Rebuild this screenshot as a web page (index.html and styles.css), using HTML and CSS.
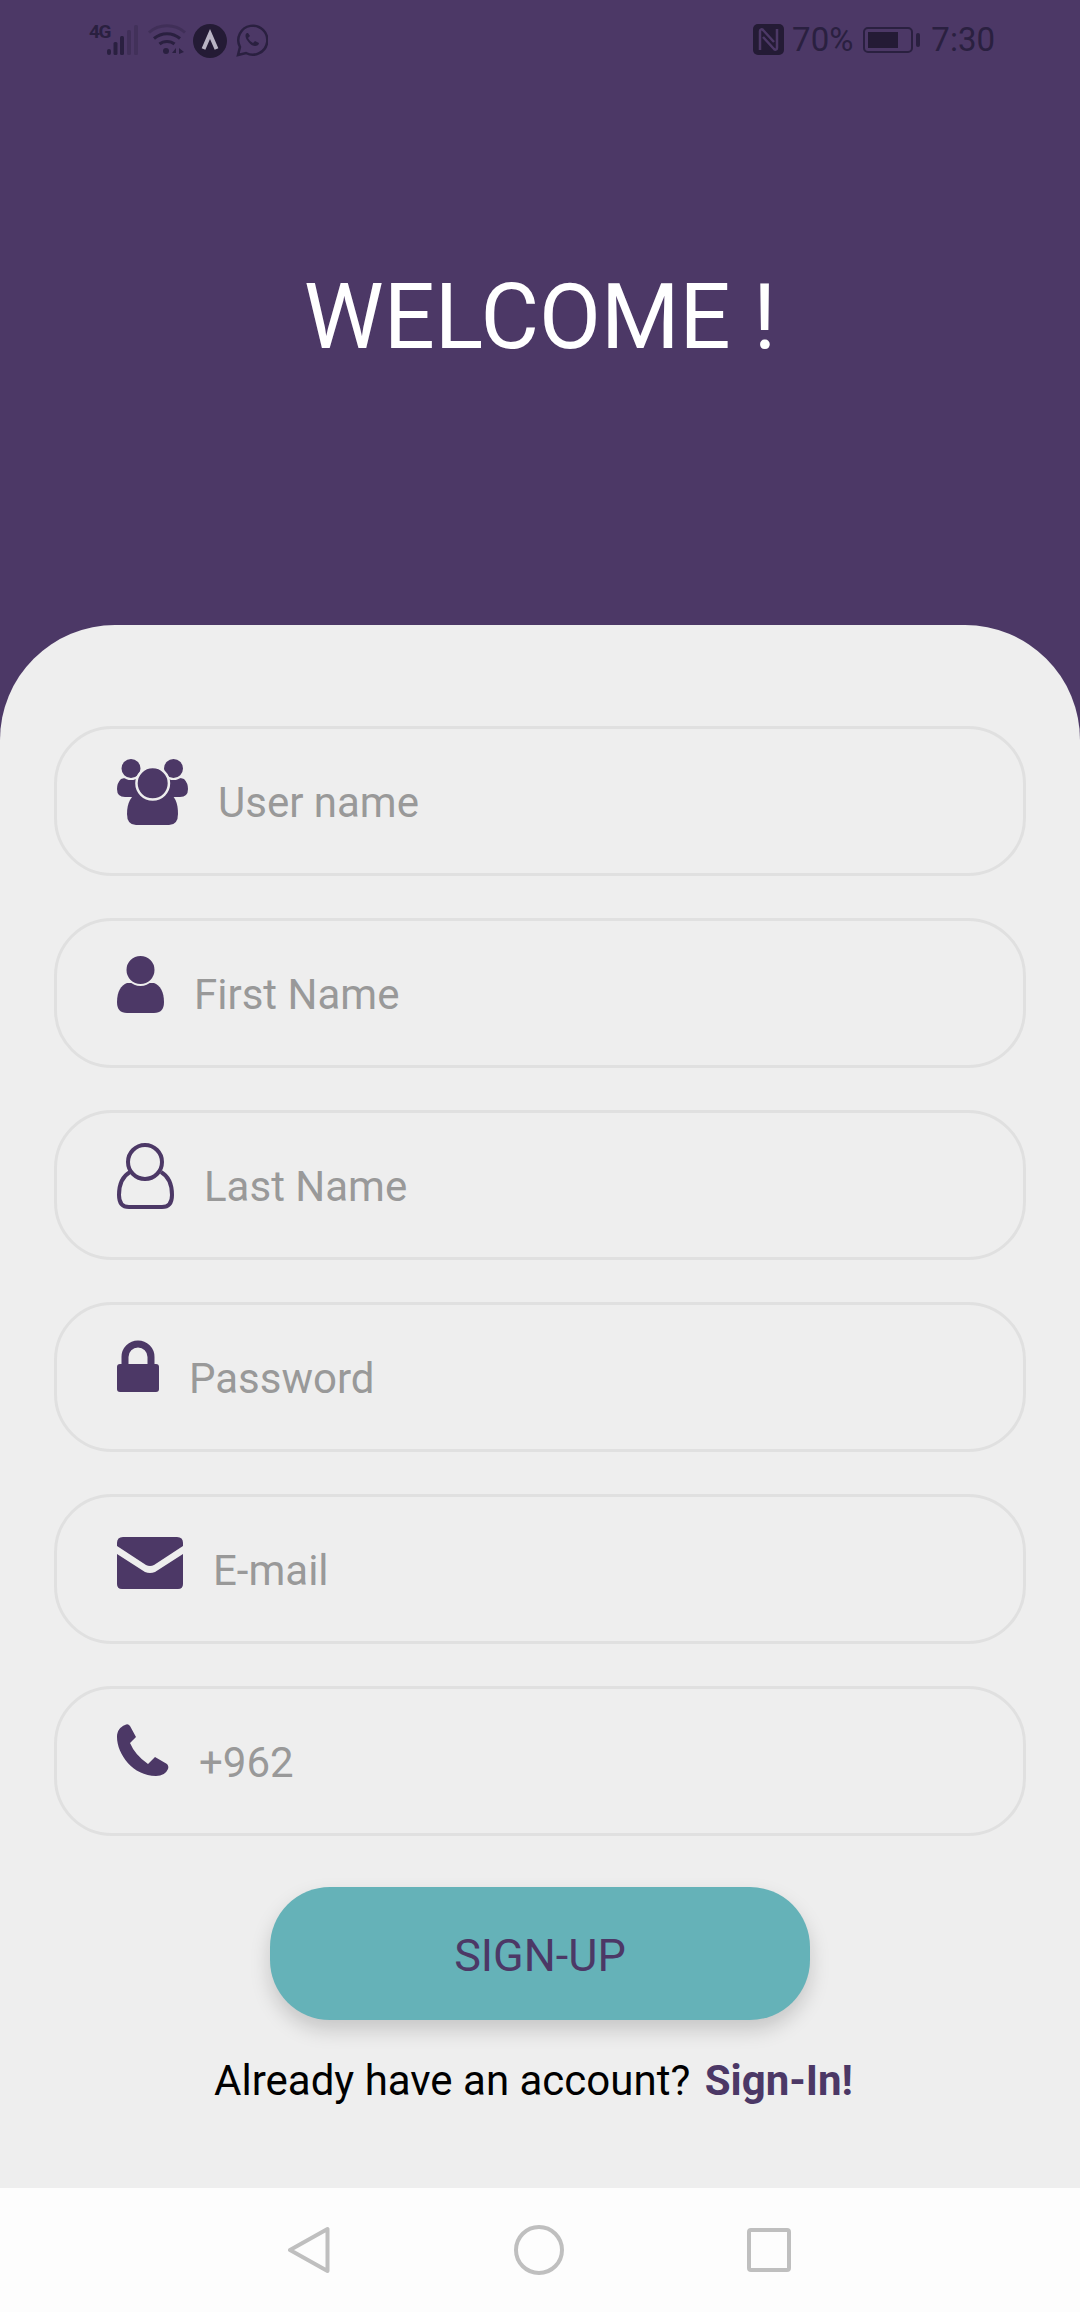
FILE: index.html
```html
<!DOCTYPE html>
<html lang="en">
<head>
    <meta charset="UTF-8">
    <title>Sign up</title>
    <link rel="stylesheet" href="styles.css">
</head>
<body>
    <div id="page">
        <div id="top">
            <div id="status">
                <div class="status-left">
                    <span class="net">4G</span>
                    <svg class="ic-signal" width="32" height="32" viewBox="0 0 32 32">
                        <rect x="0" y="25" width="4" height="6" rx="2" fill="#2a2040"/>
                        <rect x="6.500" y="18" width="4" height="13" rx="1.500" fill="#2a2040"/>
                        <rect x="13" y="12" width="4" height="19" rx="1.500" fill="#2a2040"/>
                        <rect x="20" y="6" width="4" height="25" rx="1.500" fill="#2a2040" opacity=".35"/>
                        <rect x="27" y="1" width="4" height="30" rx="1.500" fill="#2a2040" opacity=".3"/>
                    </svg>
                    <svg class="ic-wifi" width="38" height="32" viewBox="0 0 38 32">
                        <path d="M1 8.500C11-.5 27-.5 37 8.500" fill="none" stroke="#2a2040" stroke-width="3" opacity=".35"/>
                        <path d="M6 14.500C13.500 8 24.500 8 32 14.500" fill="none" stroke="#2a2040" stroke-width="3"/>
                        <path d="M11.500 20C15.500 16.500 22.500 16.500 26.500 20" fill="none" stroke="#2a2040" stroke-width="3"/>
                        <circle cx="18" cy="27" r="3" fill="#2a2040"/>
                        <path d="M24 29l4-5v5zM31 24l5 4-5 2z" fill="#2a2040"/>
                    </svg>
                    <svg class="ic-anchor" width="34" height="34" viewBox="0 0 34 34">
                        <circle cx="17" cy="17" r="17" fill="#241b35"/>
                        <path d="M10.500 25L17 10L23.500 25" fill="none" stroke="#b9b4c4" stroke-width="4"/>
                    </svg>
                    <svg class="ic-whats" width="32" height="33" viewBox="0 0 32 33">
                        <path d="M2 31l2-8A14.500 14.500 0 1 1 10 29z" fill="none" stroke="#2a2040" stroke-width="2.500"/>
                        <path d="M11 9c-2 1-2 4 0 7 2 3 5 6 8 6 2 0 4-1 4-3l-4-2-2 2c-2-1-4-3-5-5l2-2-2-3z" fill="#2a2040"/>
                    </svg>
                </div>
                <div class="status-right">
                    <svg class="ic-nfc" width="31" height="31" viewBox="0 0 31 31">
                        <rect width="31" height="31" rx="5" fill="#241b35"/>
                        <path d="M7 26V7c0-2 2-2 3-1l11 12M24 5v19c0 2-2 2-3 1L10 13" fill="none" stroke="#4c3866" stroke-width="2.500"/>
                    </svg>
                    <span class="pct">70%</span>
                    <div class="battery"><div class="battery-fill"></div></div>
                    <div class="battery-tip"></div>
                    <span class="clock">7:30</span>
                </div>
            </div>
            <h1 class="title">WELCOME !</h1>
        </div>

        <div id="card">
            <div class="field">
                <svg class="icon ic-users" width="71" height="66" viewBox="0 0 71 66">
                    <path d="M4 20q5-2 12 0h6v18H8q-8 0-8-8 0-6 4-10zM67 20q-5-2-12 0h-6v18h14q8 0 8-8 0-6-4-10z" fill="#4c3866"/>
                    <circle cx="14" cy="9.500" r="10.500" fill="#4c3866" stroke="#eee" stroke-width="2"/>
                    <circle cx="56.500" cy="9.500" r="10.500" fill="#4c3866" stroke="#eee" stroke-width="2"/>
                    <path d="M10 55c0-11 4-19 12-22h28c8 3 11 11 11 22q0 11-9 11H19q-9 0-9-11z" fill="#4c3866"/>
                    <circle cx="35.700" cy="24.300" r="16.250" fill="#4c3866" stroke="#eee" stroke-width="2.500"/>
                </svg>
                <span class="hint">User name</span>
            </div>
            <div class="field">
                <svg class="icon ic-person" width="47" height="58" viewBox="0 0 47 58">
                    <path d="M10 27C4 29 0 36 0 46q0 11 10 11h27q10 0 10-11c0-10-4-17-10-19z" fill="#4c3866"/>
                    <circle cx="23.500" cy="14" r="15" fill="#4c3866" stroke="#eee" stroke-width="2"/>
                </svg>
                <span class="hint">First Name</span>
            </div>
            <div class="field">
                <svg class="icon ic-outline" width="57" height="66" viewBox="0 0 57 66">
                    <path d="M13 29C6 33 2 41 2 52q0 12 10 12h33q10 0 10-12c0-11-4-19-11-23" fill="none" stroke="#4c3866" stroke-width="4"/>
                    <circle cx="28" cy="19" r="17" fill="none" stroke="#4c3866" stroke-width="4"/>
                </svg>
                <span class="hint">Last Name</span>
            </div>
            <div class="field">
                <svg class="icon ic-lock" width="42" height="52" viewBox="0 0 42 52">
                    <path d="M8 26V17a13 13 0 0 1 26 0v9" fill="none" stroke="#4c3866" stroke-width="7"/>
                    <rect y="24" width="42" height="28" rx="3" fill="#4c3866"/>
                </svg>
                <span class="hint">Password</span>
            </div>
            <div class="field">
                <svg class="icon ic-mail" width="66" height="52" viewBox="0 0 66 52">
                    <path d="M0 6q0-6 6-6h54q6 0 6 6v3L37 28q-4 2-8 0L0 9z" fill="#4c3866"/>
                    <path d="M0 17l28 18q5 2 10 0L66 17v30q0 5-5 5H5q-5 0-5-5z" fill="#4c3866"/>
                </svg>
                <span class="hint">E-mail</span>
            </div>
            <div class="field">
                <svg class="icon ic-phone" width="52" height="52" viewBox="0 0 52 52">
                    <path d="M8 1q3-2 5 1l6 11-6 6q5 12 18 21l7-7 12 7q2 2 1 5-3 7-12 7C16 52 0 30 0 13 0 7 3 3 8 1z" fill="#4c3866"/>
                </svg>
                <span class="hint">+962</span>
            </div>

            <div class="btn">SIGN-UP</div>
            <p class="signin">Already have an account? <a class="signin-link">Sign-In!</a></p>
        </div>

        <div id="nav">
            <svg class="nav-back" width="43" height="48" viewBox="0 0 43 48">
                <path d="M39.500 3v42L2 24z" fill="none" stroke="#bfbfbf" stroke-width="4" stroke-linejoin="round"/>
            </svg>
            <svg width="50" height="50" viewBox="0 0 50 50">
                <circle cx="25" cy="25" r="23" fill="none" stroke="#bfbfbf" stroke-width="4"/>
            </svg>
            <svg width="44" height="44" viewBox="0 0 44 44">
                <rect x="2" y="2" width="40" height="40" rx="2" fill="none" stroke="#bfbfbf" stroke-width="4"/>
            </svg>
        </div>
    </div>
</body>
</html>
```

FILE: styles.css
```css
*{
    margin: 0;
    padding: 0;
    box-sizing: border-box;
}
body{
    width: 1080px;
    height: 2312px;
    overflow: hidden;
    font-family: Roboto, "Liberation Sans", sans-serif;
    background: #4c3866;
}
#page{
    display: flex;
    flex-direction: column;
    height: 2312px;
}
#top{
    height: 625px;
}
#status{
    display: flex;
    justify-content: space-between;
    padding: 24px 85px 0 89px;
    height: 60px;
    color: #2a2040;
}
.status-left,.status-right{
    display: flex;
    align-items: flex-start;
}
.net{
    width: 18px;
    font-size: 19px;
    line-height: 16px;
    font-weight: 700;
    letter-spacing: -1.5px;
}
.ic-wifi{
    margin-left: 9px;
}
.ic-anchor{
    margin-left: 7px;
}
.ic-whats{
    margin-left: 9px;
}
.pct,.clock{
    font-size: 33px;
    line-height: 32px;
}
.pct{
    margin-left: 8px;
}
.battery{
    width: 50px;
    height: 26px;
    margin: 3px 0 0 10px;
    border: 2px solid #2a2040;
    border-radius: 5px;
    padding: 3px;
}
.battery-fill{
    width: 30px;
    height: 100%;
    background: #241b35;
}
.battery-tip{
    width: 4px;
    height: 14px;
    margin: 9px 0 0 3px;
    background: #2a2040;
    border-radius: 2px;
}
.clock{
    margin-left: 11px;
}
.title{
    margin-top: 206px;
    text-align: center;
    color: #fff;
    font-size: 90px;
    line-height: 104px;
    font-weight: 400;
}
#card{
    flex: 1;
    display: flex;
    flex-direction: column;
    align-items: center;
    gap: 42px;
    padding: 101px 54px 0;
    background: #eee;
    border-radius: 115px 115px 0 0;
}
.field{
    display: flex;
    align-items: flex-start;
    gap: 30px;
    width: 972px;
    height: 150px;
    padding-left: 60px;
    flex: none;
    border: 3px solid #e0e0e0;
    border-radius: 58px;
}
.hint{
    align-self: center;
    margin-top: 3px;
    font-size: 42px;
    color: #999;
}
.ic-users,.ic-outline{
    margin-top: 30px;
}
.ic-person,.ic-lock,.ic-phone{
    margin-top: 35px;
}
.ic-mail{
    margin-top: 40px;
}
.btn{
    width: 540px;
    height: 133px;
    margin-top: 9px;
    flex: none;
    background: #65b2b8;
    border-radius: 60px;
    box-shadow: 0 10px 20px rgba(0,0,0,.17);
    color: #4c3866;
    font-size: 45px;
    line-height: 137px;
    text-align: center;
}
.signin{
    margin: -6px 13px 0 0;
    font-size: 42px;
    color: #000;
}
.signin-link{
    margin-left: 4px;
    color: #4c3866;
    font-weight: 700;
}
#nav{
    display: flex;
    justify-content: center;
    align-items: center;
    gap: 183px;
    height: 124px;
    background: #fdfdfd;
}
.nav-back{
    margin-left: -2px;
}
```
